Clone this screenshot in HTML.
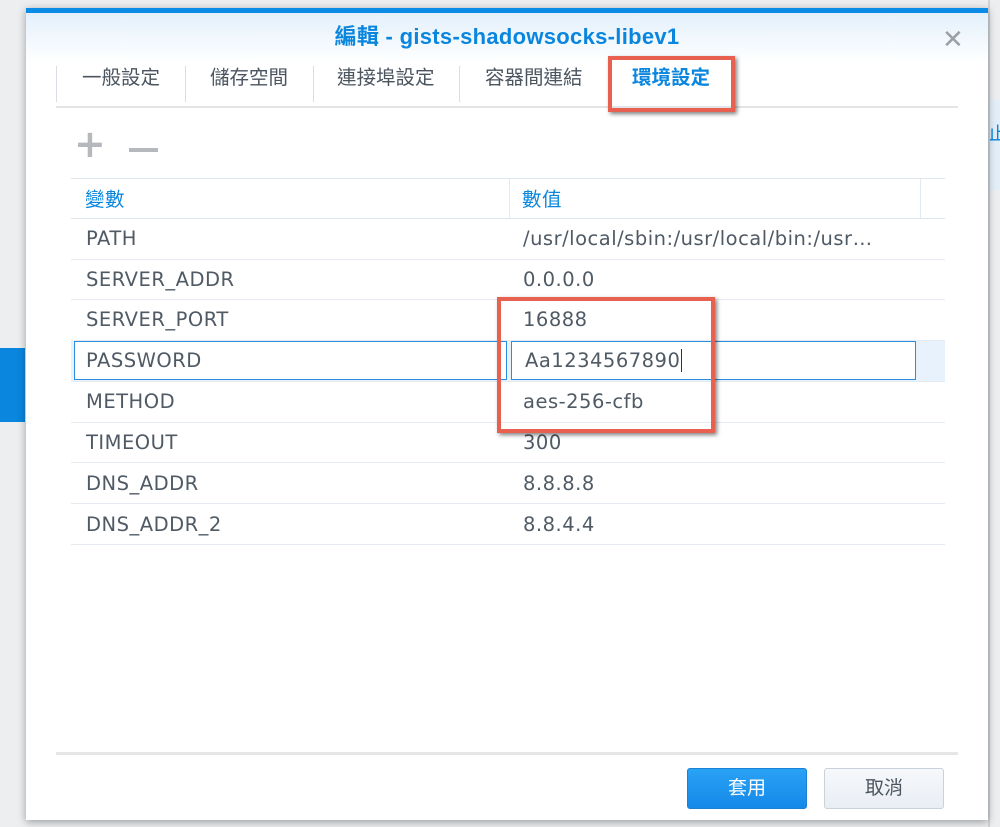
<!DOCTYPE html>
<html><head><meta charset="utf-8"><style>
*{margin:0;padding:0;box-sizing:border-box}
body{width:1000px;height:827px;background:#eceef0;position:relative;overflow:hidden;font-family:"DejaVu Sans","Liberation Sans","Noto Sans CJK TC",sans-serif;color:#4f5a65}
.a{position:absolute}
.dlg{left:26px;top:8px;width:962px;height:812px;background:#fff;border-top:5px solid #0a8be6;box-shadow:0 2px 8px rgba(0,0,0,.35)}
.hdr{left:0;top:0;width:962px;height:50px;background:linear-gradient(#e3f0fb,#fff)}
.title{left:0;top:6px;width:962px;text-align:center;color:#0a86de;font-weight:bold;font-size:22px;font-family:"Liberation Sans","Noto Sans CJK TC",sans-serif;letter-spacing:0.3px}
.tab{top:47px;height:36px;font-size:19.5px;font-family:"Liberation Sans","Noto Sans CJK TC",sans-serif;color:#4b5560;line-height:36px}
.sep{top:53px;width:1px;height:36px;background:#d9dee4}
.row{left:71px;width:874px;height:1px;background:#e6ebf1}
.t{font-size:19.5px;line-height:22px;letter-spacing:0.5px}
.btn{border-radius:3px;font-size:19px;font-family:"Liberation Sans","Noto Sans CJK TC",sans-serif;text-align:center;line-height:40px}
</style></head><body>
<div class="a" style="left:0;top:348px;width:25px;height:74px;background:#0a86de"></div>
<div class="a" style="left:990px;top:100px;width:10px;height:90px;background:#e3eef9"></div>
<div class="a" style="left:988px;top:120px;color:#0a86de;font-size:18px;font-family:'Noto Sans CJK TC',sans-serif">止</div>
<div class="a" style="left:988px;top:0;width:2px;height:827px;background:#d0d4d8"></div>
<div class="a dlg">
 <div class="a hdr"></div>
 <div class="a title">編輯 - gists-shadowsocks-libev1</div>
 <div class="a" style="left:916px;top:14px;font-size:26px;color:#9aa0a6;font-family:'DejaVu Sans';line-height:26px">✕</div>
 <div class="a sep" style="left:30px"></div>
 <div class="a tab" style="left:56px">一般設定</div>
 <div class="a sep" style="left:159px"></div>
 <div class="a tab" style="left:184px">儲存空間</div>
 <div class="a sep" style="left:287px"></div>
 <div class="a tab" style="left:311px">連接埠設定</div>
 <div class="a sep" style="left:433px"></div>
 <div class="a tab" style="left:459px">容器間連結</div>
 <div class="a tab" style="left:606px;color:#0a86de;font-weight:bold">環境設定</div>
 <div class="a" style="left:30px;top:93px;width:902px;height:2px;background:#e2e4e6"></div>
 <div class="a" style="left:582px;top:43px;width:127px;height:56px;border:4px solid #e8604f;box-shadow:2px 2px 4px rgba(0,0,0,.5)"></div>
 <div class="a" style="left:48px;top:112px;font-size:38px;color:#b5b9be;font-weight:bold;line-height:38px">+</div>
 <div class="a" style="left:103px;top:135px;width:29px;height:4px;background:#b5b9be"></div>
</div>
<div class="a row" style="top:178px;background:#dde5ef"></div>
<div class="a row" style="top:218px;background:#dde5ef"></div>
<div class="a" style="left:509px;top:179px;width:1px;height:39px;background:#e2e9f2"></div>
<div class="a" style="left:920px;top:179px;width:1px;height:39px;background:#e2e9f2"></div>
<div class="a t" style="left:85px;top:187px;color:#0a86de;font-family:'Noto Sans CJK TC',sans-serif">變數</div>
<div class="a t" style="left:522px;top:187px;color:#0a86de;font-family:'Noto Sans CJK TC',sans-serif">數值</div>
<div class="a row" style="top:259px"></div>
<div class="a row" style="top:299px"></div>
<div class="a row" style="top:340px"></div>
<div class="a" style="left:71px;top:341px;width:874px;height:40px;background:#e8f2fc"></div>
<div class="a" style="left:74px;top:341px;width:433px;height:39px;background:#fff;border:1.5px solid #2a8ee0"></div>
<div class="a" style="left:511px;top:341px;width:405px;height:39px;background:#fff;border:1.5px solid #2a8ee0"></div>
<div class="a row" style="top:381px"></div>
<div class="a row" style="top:422px"></div>
<div class="a row" style="top:462px"></div>
<div class="a row" style="top:503px"></div>
<div class="a row" style="top:544px"></div>
<div class="a t" style="left:86px;top:228px">PATH</div>
<div class="a t" style="left:523px;top:228px">/usr/local/sbin:/usr/local/bin:/usr…</div>
<div class="a t" style="left:86px;top:269px">SERVER_ADDR</div>
<div class="a t" style="left:523px;top:269px">0.0.0.0</div>
<div class="a t" style="left:86px;top:309px">SERVER_PORT</div>
<div class="a t" style="left:523px;top:309px">16888</div>
<div class="a t" style="left:86px;top:350px">PASSWORD</div>
<div class="a t" style="left:525px;top:350px">Aa1234567890<span style="border-left:1px solid #333;margin-left:1px"></span></div>
<div class="a t" style="left:86px;top:391px">METHOD</div>
<div class="a t" style="left:523px;top:391px">aes-256-cfb</div>
<div class="a t" style="left:86px;top:432px">TIMEOUT</div>
<div class="a t" style="left:523px;top:432px">300</div>
<div class="a t" style="left:86px;top:473px">DNS_ADDR</div>
<div class="a t" style="left:523px;top:473px">8.8.8.8</div>
<div class="a t" style="left:86px;top:514px">DNS_ADDR_2</div>
<div class="a t" style="left:523px;top:514px">8.8.4.4</div>
<div class="a" style="left:497px;top:297px;width:218px;height:136px;border:4px solid #e8604f;box-shadow:2px 2px 4px rgba(0,0,0,.5)"></div>
<div class="a" style="left:56px;top:752px;width:902px;height:3px;background:#e4e6e8"></div>
<div class="a btn" style="left:687px;top:768px;width:120px;height:41px;background:linear-gradient(#2aa2f5,#1489e8);color:#fff;border:1px solid #1a82d6">套用</div>
<div class="a btn" style="left:824px;top:768px;width:120px;height:41px;background:linear-gradient(#f6f8fb,#e9eef4);color:#4b5560;border:1px solid #c9d1db">取消</div>
</body></html>
